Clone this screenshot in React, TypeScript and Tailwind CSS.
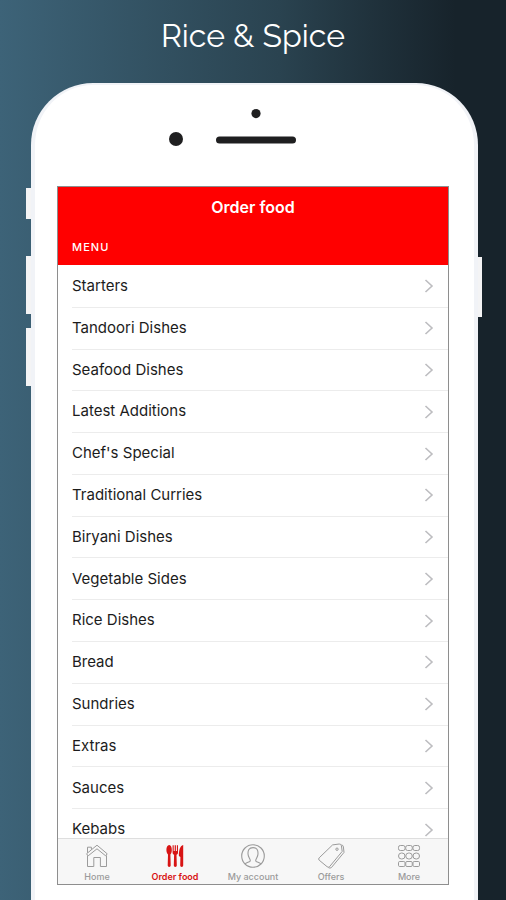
import type { ReactNode } from 'react';

const menu = [
  'Starters',
  'Tandoori Dishes',
  'Seafood Dishes',
  'Latest Additions',
  "Chef's Special",
  'Traditional Curries',
  'Biryani Dishes',
  'Vegetable Sides',
  'Rice Dishes',
  'Bread',
  'Sundries',
  'Extras',
  'Sauces',
  'Kebabs',
];

function HomeIcon() {
  return (
    <svg className="h-6 w-6" viewBox="0 0 24 24" fill="none" stroke="currentColor" strokeWidth="1" strokeLinejoin="round">
      <path d="M1.5 9.8 L12 1.2 L22.2 9.8 L20.6 11.8 L12 4.8 L3.2 11.8 Z" />
      <path d="M2.5 8.8 V3.2 H6.4 V5.6" />
      <path d="M2.5 11.4 V22.5 H8.8 V13.5 H15.4 V22.5 H21.5 V11.4" />
    </svg>
  );
}

function CutleryIcon() {
  return (
    <svg className="h-6 w-6" viewBox="0 0 24 24" fill="currentColor">
      {/* spoon */}
      <path d="M6.2 1 C8 1 8.8 3.2 8.8 6 C8.8 8.4 8.2 9.8 7.4 10.4 L7.7 21.6 Q7.7 23 6.2 23 Q4.7 23 4.7 21.6 L5 10.4 C4.2 9.8 3.4 8.4 3.4 6 C3.4 3.2 4.4 1 6.2 1 Z" />
      {/* fork */}
      <path d="M9.6 1.2 H10.7 V7 H11.7 V1.2 H12.9 V7 H13.9 V1.2 H15 V8.4 C15 9.8 14.3 10.4 13.5 10.8 L13.8 21.6 Q13.8 23 12.3 23 Q10.8 23 10.8 21.6 L11.1 10.8 C10.3 10.4 9.6 9.8 9.6 8.4 Z" />
      {/* knife */}
      <path d="M20.2 1 V21.6 Q20.2 23 18.7 23 Q17.2 23 17.2 21.6 L17.4 13 L15.9 12 C15.8 7 16.8 1.6 20.2 1 Z" />
    </svg>
  );
}

function AccountIcon() {
  return (
    <svg className="h-6 w-6" viewBox="0 0 24 24" fill="none" stroke="currentColor" strokeWidth="1.1">
      <circle cx="12" cy="12" r="11.3" />
      <path d="M4.2 20 C5 18.4 9 18.2 9.3 16.8 C9.4 15.2 7.4 13.4 7.1 10.6 C6.6 6.4 8 3.6 12 3.6 C16 3.6 17.4 6.4 16.9 10.6 C16.6 13.4 14.6 15.2 14.7 16.8 C15 18.2 19 18.4 19.8 20" />
    </svg>
  );
}

function TagIcon() {
  return (
    <svg className="h-[26px] w-[28px]" viewBox="0 0 28 26" fill="none" stroke="currentColor" strokeWidth="1" strokeLinejoin="round">
      <path d="M15.6 1.9 L22.2 1 Q24.2 0.9 24.4 2.8 L25.2 8.4 L12.6 23.6 Q11.4 24.8 10.1 23.7 L2.2 17.2 Q1 16 2.2 14.8 Z" />
      <path d="M24.6 1.8 Q26.2 2.2 26.4 4 L27 9.4 L14.4 24.6 Q13 25.6 11.4 24.6" />
      <circle cx="20" cy="6.2" r="1.2" />
    </svg>
  );
}

function MoreIcon() {
  return (
    <svg className="h-6 w-6" viewBox="0 0 24 24" fill="none" stroke="currentColor" strokeWidth="1">
      {[1.5, 8.75, 16].map((x) => (
        <g key={x}>
          <rect x={x} y="1.5" width="6.5" height="5" rx="1.8" />
          <rect x={x} y="9" width="6.5" height="6" rx="3" />
          <rect x={x} y="17.5" width="6.5" height="5" rx="1.2" />
        </g>
      ))}
    </svg>
  );
}

function Tab({ label, active, children }: { label: string; active?: boolean; children: ReactNode }) {
  return (
    <a
      href="#"
      aria-current={active ? 'page' : undefined}
      className={`flex flex-1 flex-col items-center ${active ? 'font-semibold text-[#d81414]' : 'font-medium text-[#9b9b9b]'}`}
    >
      <span className="flex h-[28px] items-center">{children}</span>
      <span className="text-[9px] leading-[14px] whitespace-nowrap">{label}</span>
    </a>
  );
}

export default function App() {
  return (
    <div className="h-screen overflow-hidden bg-linear-to-r from-[#3d6378] via-[#2a4350] via-55% to-[#17232b] to-90% font-['Inter',sans-serif]">
      <h1 className="pt-4 pb-[27px] text-center font-['Raleway','Lato',sans-serif] text-[32px] leading-10 font-normal text-white">
        Rice &amp; Spice
      </h1>

      {/* Phone body */}
      <div className="relative mr-7 ml-[31px] rounded-t-[62px] border-x-4 border-t-2 border-[#f1f3f7] bg-white pr-[25px] pb-24 pl-[22px]">
        {/* Side buttons */}
        <span className="absolute top-[103px] -left-[9px] h-[31px] w-[5px] bg-[#f4f4f5]" />
        <span className="absolute top-[171px] -left-[9px] h-[58px] w-[5px] bg-[#f4f4f5]" />
        <span className="absolute top-[243px] -left-[9px] h-[58px] w-[5px] bg-[#f4f4f5]" />
        <span className="absolute top-[172px] -right-2 h-[60px] w-1 bg-[#f4f4f5]" />

        {/* Camera, sensor and speaker */}
        <div className="flex h-[101px] justify-center pt-6 pl-[6px]">
          <svg className="h-10 w-[176px]" viewBox="0 0 176 40" fill="#1f1f20" aria-hidden="true">
            <circle cx="88" cy="4.6" r="4.6" />
            <circle cx="8" cy="30" r="7" />
            <rect x="48" y="27.5" width="80" height="7" rx="3.5" />
          </svg>
        </div>

        {/* Screen */}
        <main className="border border-[#8e8e8e] bg-white">
          <header className="bg-[#ff0000] text-white">
            <h2 className="pt-2 text-center text-base leading-6 font-semibold">Order food</h2>
            <h3 className="px-[14px] pt-[18px] pb-2 text-[11px] leading-5 font-medium tracking-widest">MENU</h3>
          </header>

          <div className="h-[573px] overflow-hidden pt-px">
            <ul className="flex h-[585px] flex-col pl-[14px]">
              {menu.map((item) => (
                <li key={item} className="flex-1 border-b border-[#ececec]">
                  <a href="#" className="flex h-full items-center justify-between pr-[14px] text-[15px] text-[#1c1c1c]">
                    {item}
                    <svg className="h-4 w-[10px] text-[#bdbdc0]" viewBox="0 0 10 16" fill="none" stroke="currentColor" strokeWidth="1.6">
                      <path d="M1.5 2 L8 8 L1.5 14" />
                    </svg>
                  </a>
                </li>
              ))}
            </ul>
          </div>

          <nav className="flex border-t border-[#dedede] bg-[#f7f7f7] pt-[3px]">
            <Tab label="Home">
              <HomeIcon />
            </Tab>
            <Tab label="Order food" active>
              <CutleryIcon />
            </Tab>
            <Tab label="My account">
              <AccountIcon />
            </Tab>
            <Tab label="Offers">
              <TagIcon />
            </Tab>
            <Tab label="More">
              <MoreIcon />
            </Tab>
          </nav>
        </main>
      </div>
    </div>
  );
}
